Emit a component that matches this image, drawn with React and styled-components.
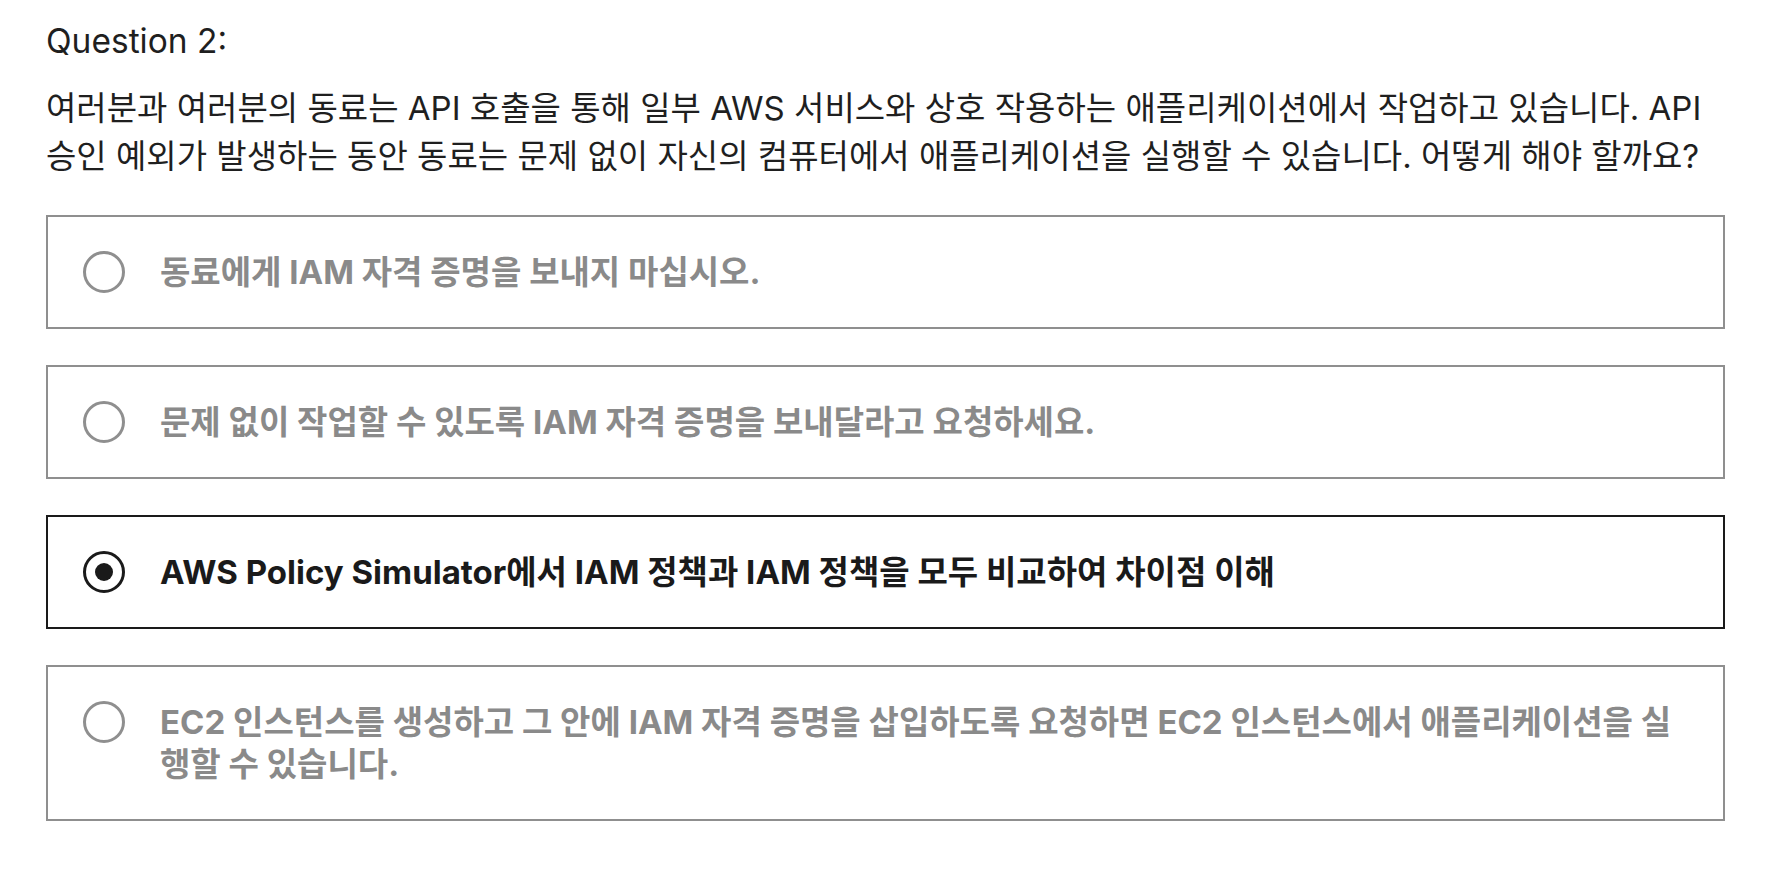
import React from "react";
import styled, { createGlobalStyle } from "styled-components";

const GlobalStyle = createGlobalStyle`
  body {
    margin: 0;
    background: #fff;
    font-family: Inter, "Noto Sans CJK KR", sans-serif;
  }
`;

const options = [
  { text: "동료에게 IAM 자격 증명을 보내지 마십시오." },
  { text: "문제 없이 작업할 수 있도록 IAM 자격 증명을 보내달라고 요청하세요." },
  {
    text: "AWS Policy Simulator에서 IAM 정책과 IAM 정책을 모두 비교하여 차이점 이해",
    selected: true,
  },
  {
    text: "EC2 인스턴스를 생성하고 그 안에 IAM 자격 증명을 삽입하도록 요청하면 EC2 인스턴스에서 애플리케이션을 실행할 수 있습니다.",
  },
];

const App = () => {
  return (
    <StyledQuiz>
      <GlobalStyle />
      <Title>Question 2:</Title>
      <Prompt>
        여러분과 여러분의 동료는 API 호출을 통해 일부 AWS 서비스와 상호 작용하는
        애플리케이션에서 작업하고 있습니다. API 승인 예외가 발생하는 동안 동료는
        문제 없이 자신의 컴퓨터에서 애플리케이션을 실행할 수 있습니다. 어떻게 해야
        할까요?
      </Prompt>
      <Options>
        {options.map((o, i) => (
          <Option key={i} $selected={o.selected}>
            <Radio $selected={o.selected} />
            <Label $selected={o.selected}>{o.text}</Label>
          </Option>
        ))}
      </Options>
    </StyledQuiz>
  );
};

const StyledQuiz = styled.div`
  padding: 17px 57px 40px 46px;
`;

const Title = styled.div`
  font-size: 33.5px;
  line-height: 48px;
  color: #1f1f1f;
`;

const Prompt = styled.p`
  margin: 19px 0 35px;
  font-size: 33px;
  line-height: 48px;
  color: #1f1f1f;
`;

const Options = styled.div`
  display: flex;
  flex-direction: column;
  gap: 36px;
`;

const Option = styled.div`
  display: flex;
  align-items: flex-start;
  gap: 35px;
  padding: 34px 35px;
  border: 2px solid ${(p) => (p.$selected ? "#1a1a1a" : "#8f8f8f")};
`;

const Radio = styled.span`
  flex: none;
  box-sizing: border-box;
  width: 42px;
  height: 42px;
  border-radius: 50%;
  border: 3.5px solid ${(p) => (p.$selected ? "#1a1a1a" : "#8f8f8f")};
  display: flex;
  align-items: center;
  justify-content: center;
  &::after {
    content: "";
    display: ${(p) => (p.$selected ? "block" : "none")};
    width: 18px;
    height: 18px;
    border-radius: 50%;
    background: #1a1a1a;
  }
`;

const Label = styled.div`
  font-size: 33px;
  line-height: 42px;
  font-weight: 700;
  color: ${(p) => (p.$selected ? "#1a1a1a" : "#8a8a8a")};
`;

export default App;
